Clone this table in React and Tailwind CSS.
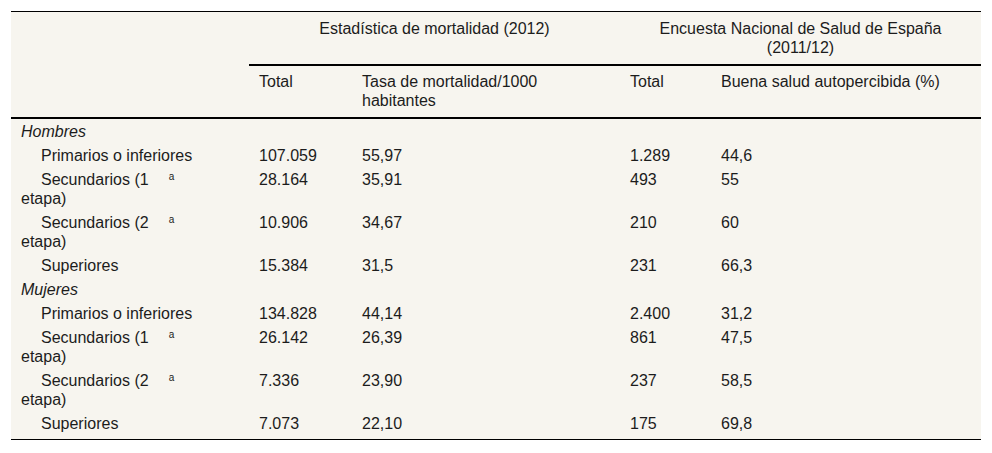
import React from "react";

const groups = [
  {
    name: "Hombres",
    rows: [
      ["Primarios o inferiores", null, "107.059", "55,97", "1.289", "44,6"],
      ["Secundarios (1", "etapa)", "28.164", "35,91", "493", "55"],
      ["Secundarios (2", "etapa)", "10.906", "34,67", "210", "60"],
      ["Superiores", null, "15.384", "31,5", "231", "66,3"],
    ],
  },
  {
    name: "Mujeres",
    rows: [
      ["Primarios o inferiores", null, "134.828", "44,14", "2.400", "31,2"],
      ["Secundarios (1", "etapa)", "26.142", "26,39", "861", "47,5"],
      ["Secundarios (2", "etapa)", "7.336", "23,90", "237", "58,5"],
      ["Superiores", null, "7.073", "22,10", "175", "69,8"],
    ],
  },
];

const App = () => {
  const last = groups.length - 1;

  return (
    <div className="min-h-screen bg-white pt-[11px] pl-[11px] font-['Liberation_Sans',Arial,sans-serif] text-[16px] leading-[19px] text-[#1c1c1c]">
      <table className="w-[970px] table-fixed border-collapse bg-[#f7f5ef] border-t border-b border-black">
        <colgroup>
          <col className="w-[238px]" />
          <col className="w-[103px]" />
          <col className="w-[268px]" />
          <col className="w-[91px]" />
          <col className="w-[270px]" />
        </colgroup>
        <thead>
          <tr>
            <th className="px-[10px] pt-[7px] pb-[7px]"></th>
            <th
              colSpan={2}
              className="px-[10px] pt-[7px] pb-[7px] align-top text-center font-normal border-b-2 border-black"
            >
              Estadística de mortalidad (2012)
            </th>
            <th
              colSpan={2}
              className="px-[10px] pt-[7px] pb-[7px] align-top text-center font-normal border-b-2 border-black"
            >
              Encuesta Nacional de Salud de España (2011/12)
            </th>
          </tr>
          <tr className="border-b-2 border-black">
            <th className="px-[10px] pt-[6px] pb-[7px]"></th>
            <th className="px-[10px] pt-[6px] pb-[7px] align-top text-left font-normal">Total</th>
            <th className="px-[10px] pt-[6px] pb-[7px] align-top text-left font-normal">
              Tasa de mortalidad/1000 habitantes
            </th>
            <th className="px-[10px] pt-[6px] pb-[7px] align-top text-left font-normal">Total</th>
            <th className="px-[10px] pt-[6px] pb-[7px] align-top text-left font-normal">
              Buena salud autopercibida (%)
            </th>
          </tr>
        </thead>
        <tbody>
          {groups.map((g, gi) => (
            <React.Fragment key={g.name}>
              <tr>
                <td colSpan={5} className="px-[10px] pt-[3px] pb-[2px] italic">
                  {g.name}
                </td>
              </tr>
              {g.rows.map((r, ri) => {
                const end = gi === last && ri === g.rows.length - 1;
                const cell = `px-[10px] pt-[3px] align-top ${end ? "pb-[6px]" : "pb-[2px]"}`;
                return (
                  <tr key={ri}>
                    <td className={`${cell} indent-5`}>
                      {r[0]}
                      {r[1] && (
                        <>
                          <sup className="ml-[20px] text-[10px]">a</sup>
                          <br />
                          {r[1]}
                        </>
                      )}
                    </td>
                    <td className={cell}>{r[2]}</td>
                    <td className={cell}>{r[3]}</td>
                    <td className={cell}>{r[4]}</td>
                    <td className={cell}>{r[5]}</td>
                  </tr>
                );
              })}
            </React.Fragment>
          ))}
        </tbody>
      </table>
    </div>
  );
};

export default App;
